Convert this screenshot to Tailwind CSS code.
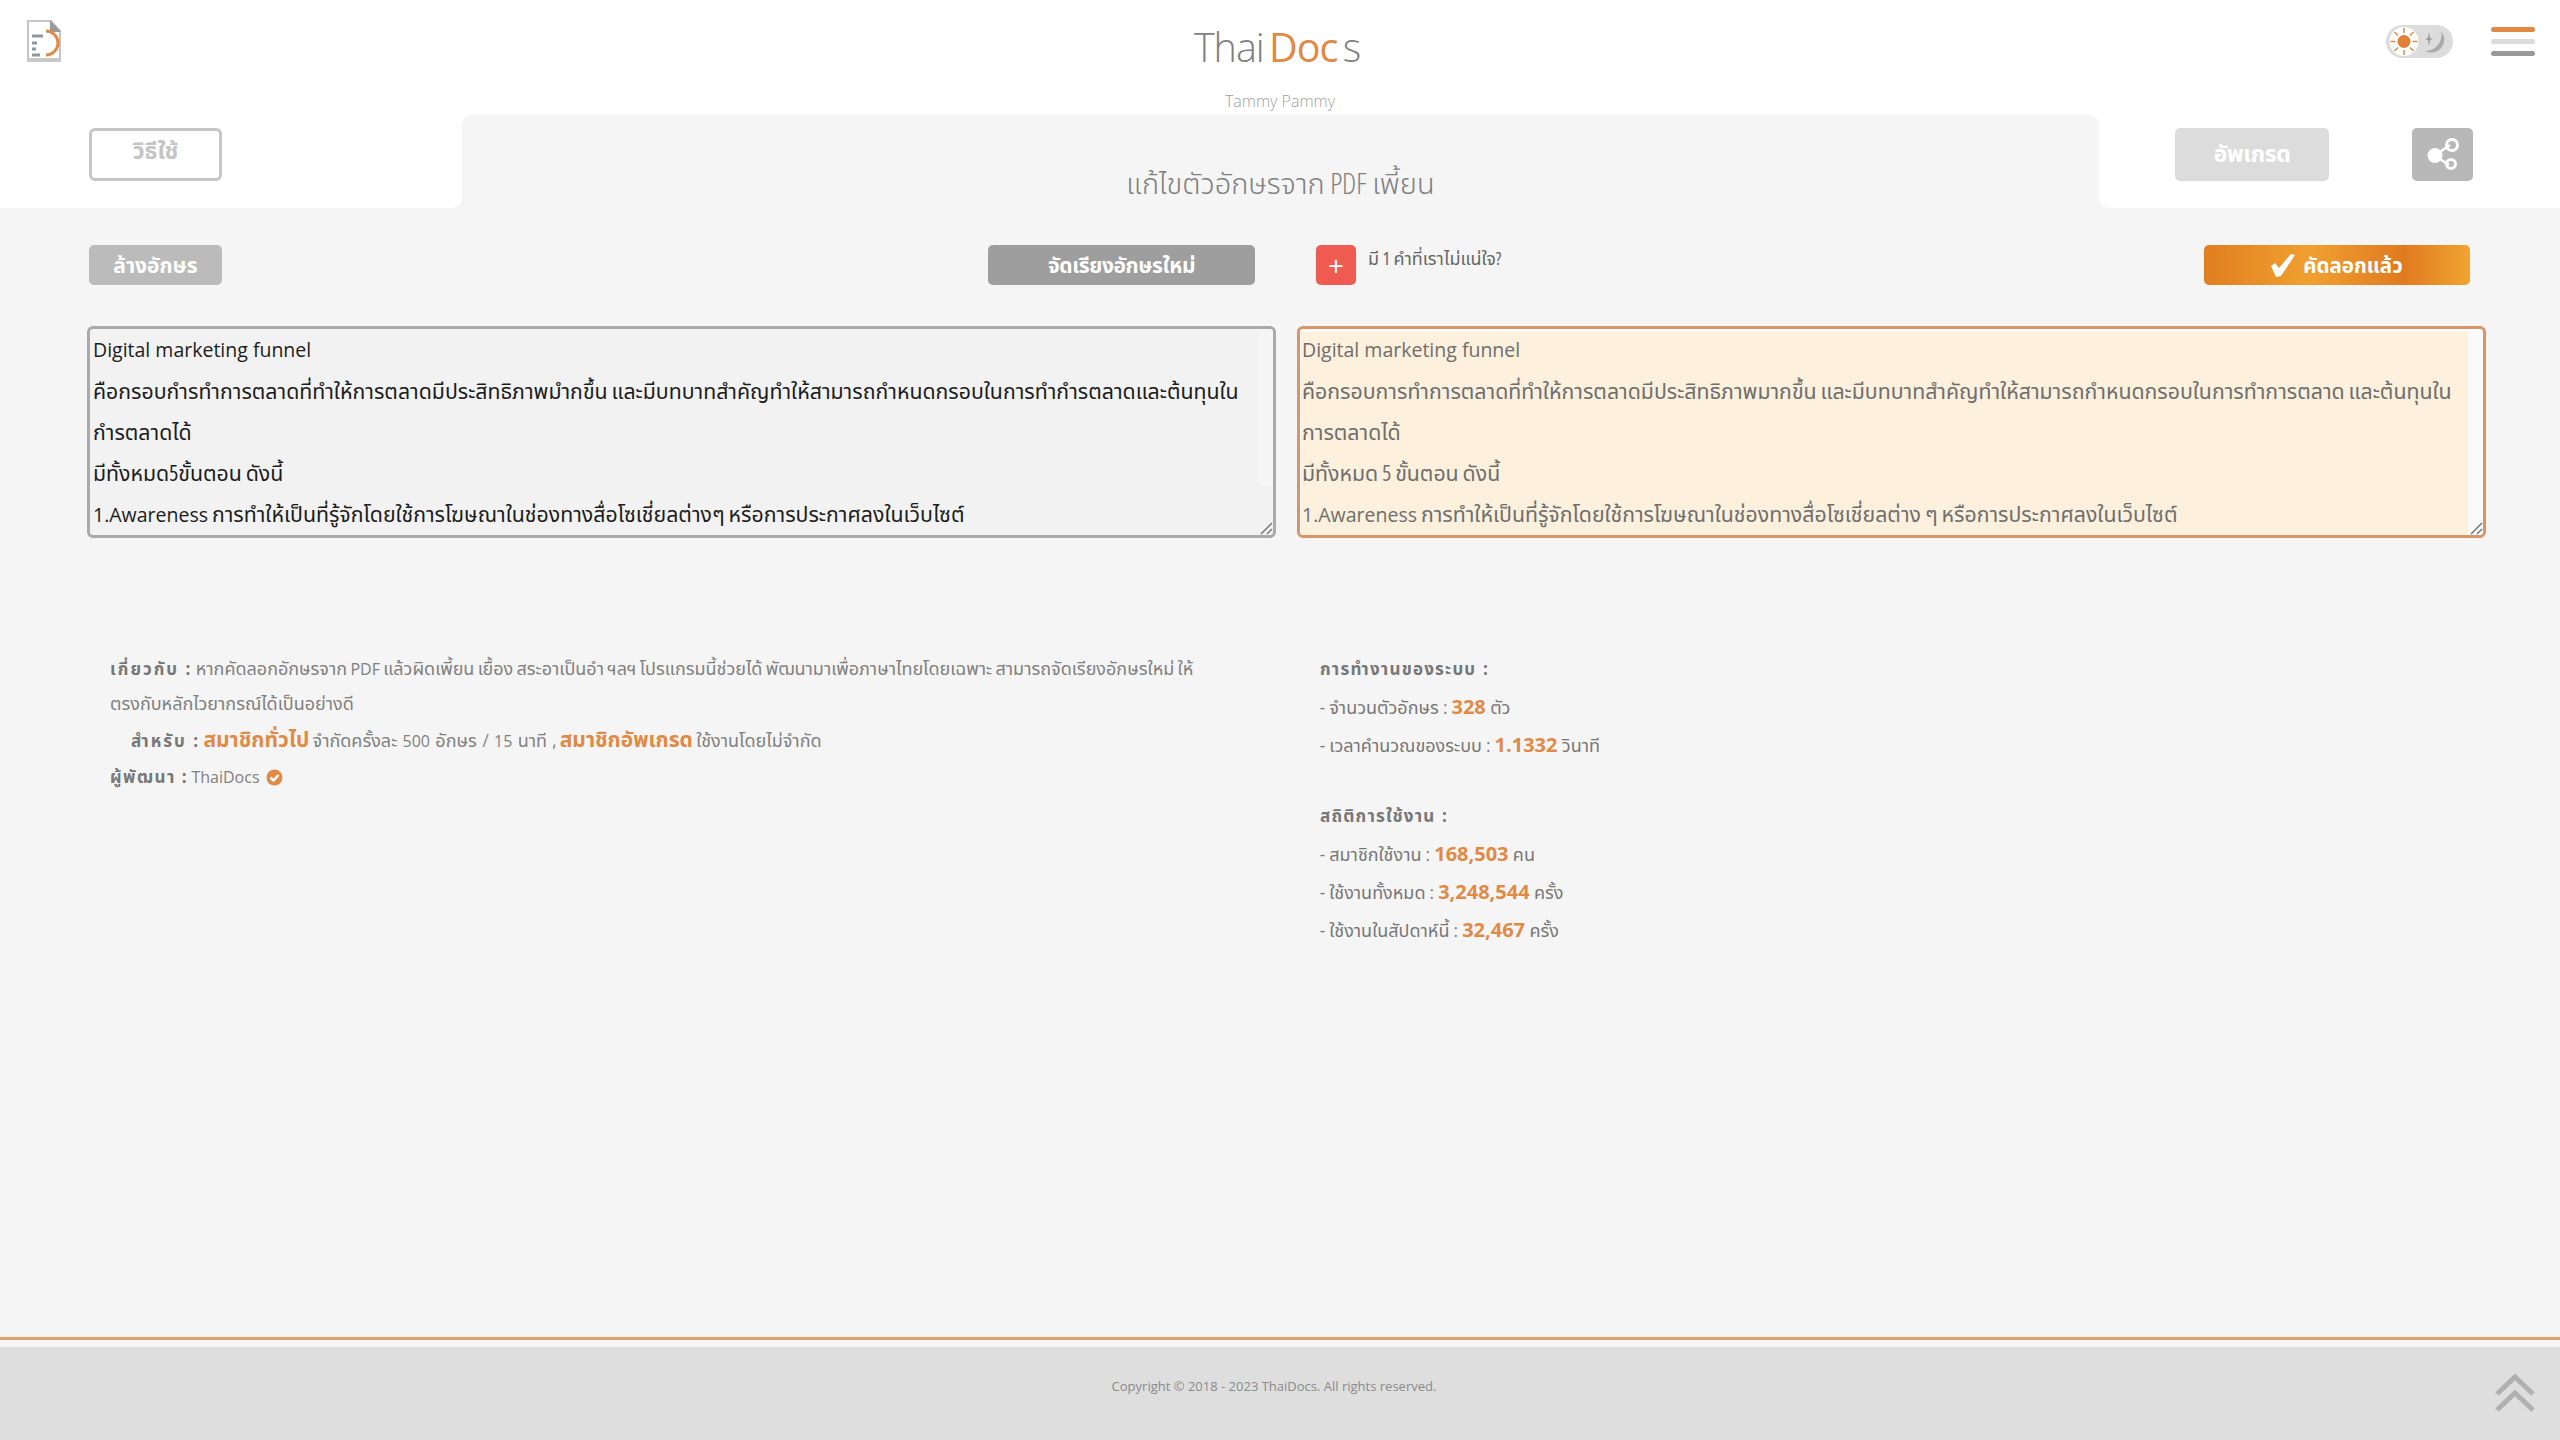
<!doctype html>
<html lang="th">
<head>
<meta charset="utf-8">
<title>ThaiDocs</title>
<script src="https://cdn.jsdelivr.net/npm/@tailwindcss/browser@4"></script>
</head>
<body class="m-0">
<div class="w-[2560px] h-[1440px] overflow-hidden flex flex-col bg-[#f5f5f5] font-['Open_Sans','Noto_Sans_Thai','Noto_Sans',sans-serif] [font-stretch:75%] text-[#666]">
  <header class="h-[115px] shrink-0 bg-white grid grid-cols-[1fr_auto_1fr]">
    <div class="pl-[26px] pt-[20px]">
      <svg width="36" height="42" viewBox="0 0 36 42">
        <path d="M2 1h23l9 10v29H2z" fill="#fff" stroke="#c4c4c4" stroke-width="2"/>
        <path d="M1 38h34v3a1 1 0 0 1-1 1H2a1 1 0 0 1-1-1z" fill="#c8c8c8"/>
        <path d="M24 0l11 12H24z" fill="#9a9a9a"/>
        <path d="M6 16h11M6 23h5M6 29h4M6 35h8" stroke="#8f98a0" stroke-width="3"/>
        <path d="M20 11a12 12 0 0 1 0 24" fill="none" stroke="#e08a45" stroke-width="3"/>
      </svg>
    </div>
    <div class="flex flex-col items-center">
      <div class="mt-[22px] mr-[6px] h-[50px] text-[39.500px] leading-[50px] font-light text-[#808080] tracking-[-1px] whitespace-nowrap [font-stretch:100%]">Thai <span class="text-[#e08a45] font-normal -ml-[4px]">Doc</span> <span class="-ml-[4px]">s</span></div>
      <div class="mt-[17px] text-[16px] leading-[24px] font-light text-[#a0a0a0] [font-stretch:100%]">Tammy Pammy</div>
    </div>
    <div class="flex justify-end items-start">
      <div class="relative mt-[25px] w-[67px] h-[33px] rounded-full bg-[#dcdcdc]">
        <svg class="absolute left-0 top-0" width="67" height="33" viewBox="0 0 67 33">
          <circle cx="18" cy="16.500" r="14.500" fill="#fff"/>
          <circle cx="18" cy="16.500" r="6.500" fill="#e07f35"/>
          <path d="M18 3v5M18 25v5M4.500 16.500h5M26.500 16.500h5M8.500 7l3.500 3.500M24 22.500l3.500 3.500M27.500 7L24 10.500M12 22.500L8.500 26" stroke="#e08a45" stroke-width="1.500"/>
          <path d="M55 6A13 13 0 0 1 39 26A16 16 0 0 0 55 6z" fill="#aaa"/>
          <path d="M43 7l1 6 3 1-3 1-1 6-1-6-3-1 3-1z" fill="#999"/>
        </svg>
      </div>
      <div class="mt-[27px] ml-[38px] mr-[25px] w-[44px] flex flex-col gap-[7px]">
        <div class="h-[5px] rounded-full bg-[#e08a45]"></div>
        <div class="h-[5px] rounded-full bg-[#dcdcdc]"></div>
        <div class="h-[5px] rounded-full bg-[#999]"></div>
      </div>
    </div>
  </header>

  <section class="h-[93px] shrink-0 flex bg-[linear-gradient(#fff_50%,#f5f5f5_50%)]">
    <div class="w-[462px] shrink-0 bg-white rounded-br-[10px] pl-[89px] pt-[13px]">
      <div class="w-[133px] h-[53px] rounded-[6px] border-[3px] border-[#c6c6c6] bg-white flex justify-center pt-[2px] text-[23px] leading-[34px] font-bold text-[#c4c4c4]">วิธีใช้</div>
    </div>
    <div class="flex-1 rounded-t-[10px] bg-[#f5f5f5] flex justify-center pt-[48px]">
      <h1 class="text-[29px] leading-[40px] font-light text-[#808080]">แก้ไขตัวอักษรจาก PDF เพี้ยน</h1>
    </div>
    <div class="w-[461px] shrink-0 bg-white rounded-bl-[10px] pt-[13px] pl-[76px] flex gap-[83px] items-start">
      <div class="w-[154px] h-[53px] rounded-[5px] bg-[#dcdcdc] flex items-center justify-center pb-[2px] text-[23px] tracking-[-.4px] font-bold text-white">อัพเกรด</div>
      <div class="w-[61px] h-[53px] rounded-[5px] bg-[#b8b8b8] flex items-center justify-center">
        <svg width="34" height="36" viewBox="0 0 34 36" fill="none">
          <path d="M11 17L24 8M11 20l12 8" stroke="#fff" stroke-width="2.500"/>
          <circle cx="9" cy="18.500" r="7.500" fill="#fff"/>
          <circle cx="26" cy="8" r="5.500" stroke="#fff" stroke-width="3"/>
          <circle cx="25" cy="27" r="4.500" stroke="#fff" stroke-width="3"/>
        </svg>
      </div>
    </div>
  </section>

  <main class="flex-1 min-h-0">
    <div class="pt-[37px] pl-[89px] flex items-start">
      <button class="w-[133px] h-[40px] rounded-[5px] bg-[#bbb] pt-[2px] text-[21px] font-bold text-white">ล้างอักษร</button>
      <button class="ml-[766px] w-[267px] h-[40px] rounded-[5px] bg-[#9e9e9e] pt-[2px] text-[21px] tracking-[-.4px] font-bold text-white">จัดเรียงอักษรใหม่</button>
      <button class="ml-[61px] w-[40px] h-[40px] rounded-[5px] bg-[#ef5b50] text-[28px] leading-[36px] text-white [font-stretch:100%]">+</button>
      <span class="ml-[12px] mt-[1px] text-[18px] leading-[24px] text-[#666]">มี 1 คำที่เราไม่แน่ใจ?</span>
      <button class="ml-auto mr-[90px] w-[266px] h-[40px] rounded-[5px] bg-[linear-gradient(90deg,#e07f20,#f0a030_40%,#e07a20_75%,#f0a530)] text-[20.500px] font-bold text-white flex items-center justify-center gap-[8px]">
        <svg width="24" height="23" viewBox="0 0 24 23" fill="#fff"><path d="M0 12l4-3 4 5L20 0l4 1L10 22l-5 1z"/></svg>
        <span>คัดลอกแล้ว</span>
      </button>
    </div>

    <div class="mt-[41px] pl-[87px] flex gap-[21px] items-start">
      <div class="relative w-[1189px] h-[212px] rounded-[6px] border-[3px] border-[#aaa] bg-[#f2f2f2] pl-[3px] overflow-hidden text-[21.300px] leading-[41px] text-[#1c1c1c] whitespace-nowrap">
        <div class="absolute right-0 top-0 w-[14px] h-[156px] bg-[#f5f5f5]"></div>
        <div class="-mt-[1px]">
        <span class="text-[19.500px] [font-stretch:100%]">Digital marketing funnel</span><br>
        คือกรอบกำรทำการตลาดที่ทำให้การตลาดมีประสิทธิภาพมำกขึ้น และมีบทบาทสำคัญทำให้สามารถกำหนดกรอบในการทำกำรตลาดและต้นทุนใน<br>
        กำรตลาดได้<br>
        มีทั้งหมด5ขั้นตอน ดังนี้<br>
        <span class="text-[19.500px] [font-stretch:100%]">1.Awareness</span> การทำให้เป็นที่รู้จักโดยใช้การโฆษณาในช่องทางสื่อโซเชี่ยลต่างๆ หรือการประกาศลงในเว็บไซต์
        </div>
        <svg class="absolute right-0 bottom-0" width="15" height="15" viewBox="0 0 15 15"><path d="M14 3L3 14M14 9l-5 5" stroke="#777" stroke-width="1.500"/></svg>
      </div>
      <div class="relative w-[1189px] h-[212px] rounded-[6px] border-[3px] border-[#d89566] bg-[#fafafa] overflow-hidden">
        <div class="flow-root w-[1167px] ml-[1px] mt-[3px] h-full bg-[#fdf0dc] pl-[1px] text-[21.300px] leading-[41px] text-[#6e6e6e] whitespace-nowrap">
          <div class="-mt-[4px]">
          <span class="text-[19.500px] [font-stretch:100%]">Digital marketing funnel</span><br>
          คือกรอบการทำการตลาดที่ทำให้การตลาดมีประสิทธิภาพมากขึ้น และมีบทบาทสำคัญทำให้สามารถกำหนดกรอบในการทำการตลาด และต้นทุนใน<br>
          การตลาดได้<br>
          มีทั้งหมด 5 ขั้นตอน ดังนี้<br>
          <span class="text-[19.500px] [font-stretch:100%]">1.Awareness</span> การทำให้เป็นที่รู้จักโดยใช้การโฆษณาในช่องทางสื่อโซเชี่ยลต่าง ๆ หรือการประกาศลงในเว็บไซต์
          </div>
        </div>
        <svg class="absolute right-0 bottom-0" width="15" height="15" viewBox="0 0 15 15"><path d="M14 3L3 14M14 9l-5 5" stroke="#777" stroke-width="1.500"/></svg>
      </div>
    </div>

    <div class="mt-[112px] pl-[110px] flex items-start">
      <div class="w-[1210px] shrink-0 pt-[1px] text-[18px] text-[#808080]">
        <p class="leading-[34px]"><b class="text-[17px] text-[#777] tracking-[2px] [font-stretch:100%]">เกี่ยวกับ :</b> หากคัดลอกอักษรจาก <span class="text-[16px] [font-stretch:100%]">PDF</span> แล้วผิดเพี้ยน เยื้อง สระอาเป็นอำ ฯลฯ โปรแกรมนี้ช่วยได้ พัฒนามาเพื่อภาษาไทยโดยเฉพาะ สามารถจัดเรียงอักษรใหม่ ให้<br>ตรงกับหลักไวยากรณ์ได้เป็นอย่างดี</p>
        <p class="leading-[36px] pl-[21px] pt-[2px]"><b class="text-[17px] text-[#777] tracking-[2px] [font-stretch:100%]">สำหรับ :</b> <b class="text-[21px] leading-none text-[#e08a45] [font-stretch:100%]">สมาชิกทั่วไป</b> <span class="[word-spacing:2px]">จำกัดครั้งละ <span class="text-[16px] [font-stretch:100%]">500</span> อักษร / <span class="text-[16px] [font-stretch:100%]">15</span> นาที ,</span> <b class="text-[21px] leading-none text-[#e08a45] [font-stretch:100%]">สมาชิกอัพเกรด</b> ใช้งานโดยไม่จำกัด</p>
        <p class="leading-[35px] flex items-center gap-[6px]"><span><b class="text-[17px] text-[#777] tracking-[1.500px] [font-stretch:100%]">ผู้พัฒนา :</b> <span class="text-[16px] [font-stretch:100%]">ThaiDocs</span></span>
          <svg width="17" height="17" viewBox="0 0 17 17"><circle cx="8.500" cy="8.500" r="8" fill="#e08a45"/><path d="M4.500 8.500l3 3 5-5.500" fill="none" stroke="#fff" stroke-width="2.500"/></svg>
        </p>
      </div>
      <div class="text-[18px] leading-[38px] text-[#777] [word-spacing:1px]">
        <p class="text-[17px] font-bold [font-stretch:100%] tracking-[1.200px]">การทำงานของระบบ :</p>
        <p>- จำนวนตัวอักษร : <b class="text-[20px] leading-none text-[#e08a45] [font-stretch:100%]">328</b> ตัว</p>
        <p>- เวลาคำนวณของระบบ : <b class="text-[20px] leading-none text-[#e08a45] [font-stretch:100%]">1.1332</b> วินาที</p>
        <p class="mt-[33px] text-[17px] font-bold [font-stretch:100%] tracking-[1.200px]">สถิติการใช้งาน :</p>
        <p>- สมาชิกใช้งาน : <b class="text-[20px] leading-none text-[#e08a45] [font-stretch:100%]">168,503</b> คน</p>
        <p>- ใช้งานทั้งหมด : <b class="text-[20px] leading-none text-[#e08a45] [font-stretch:100%]">3,248,544</b> ครั้ง</p>
        <p>- ใช้งานในสัปดาห์นี้ : <b class="text-[20px] leading-none text-[#e08a45] [font-stretch:100%]">32,467</b> ครั้ง</p>
      </div>
    </div>
  </main>

  <div class="h-[3px] shrink-0 bg-[#e0a070]"></div>
  <div class="h-[7px] shrink-0"></div>
  <footer class="relative h-[93px] shrink-0 bg-[#dedede] pt-[27px] pr-[12px] text-center text-[13px] leading-[24px] text-[#8a8a8a] [font-stretch:100%]">
    Copyright © 2018 - 2023 ThaiDocs. All rights reserved.
    <svg class="absolute right-[24px] top-[26px]" width="42" height="40" viewBox="0 0 42 40" fill="none"><path d="M3 21L21 4l18 17M3 37l18-17 18 17" stroke="#b0b0b0" stroke-width="5"/></svg>
  </footer>
</div>
</body>
</html>
